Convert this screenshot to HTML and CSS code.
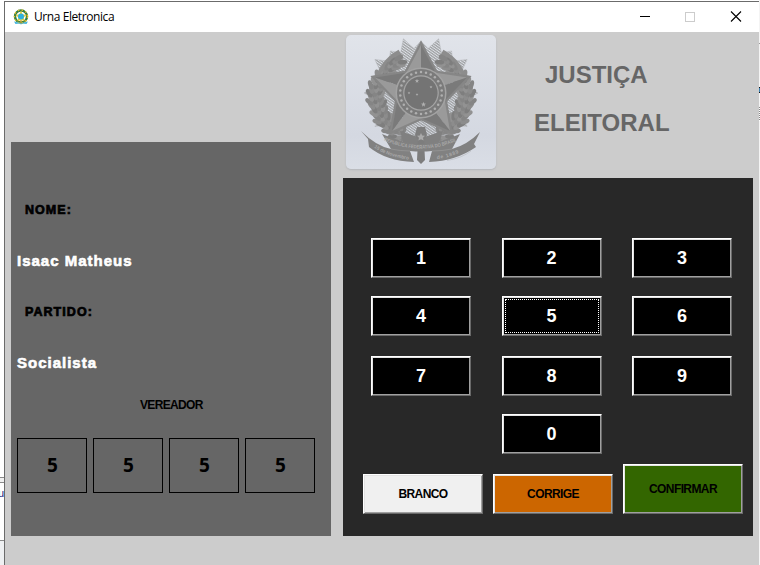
FILE: index.html
```html
<!DOCTYPE html>
<html lang="pt-BR">
<head>
<meta charset="utf-8">
<title>Urna Eletronica</title>
<link rel="stylesheet" href="styles.css">
</head>
<body>
<div class="desktop">
  <div class="behind-left">
    <div class="pane pane-a"></div>
    <div class="pane pane-b"></div>
    <div class="pane pane-c"><span>u</span></div>
    <div class="pane pane-d"></div>
  </div>
  <main class="window">
    <header class="titlebar">
      <svg class="app-icon" viewBox="0 0 16 16">
        <circle cx="8" cy="7.500" r="6" fill="none" stroke="#2f7d42" stroke-width="2.400"/>
        <circle cx="8" cy="7.500" r="6.500" fill="none" stroke="#e5bd28" stroke-width="1.400" stroke-dasharray="1.600 2.200"/>
        <path d="M8 1.500l1.600 4 4.200.3-3.200 2.700 1.100 4.200L8 10.400l-3.700 2.300 1.100-4.200-3.200-2.700 4.200-.3z" fill="#e8cf3c"/>
        <circle cx="8" cy="7.500" r="3" fill="#2fb0dc"/>
        <path d="M1 12.500l3 .8 4 .7 4-.7 3-.8-1.500 2.500-4-.5-1.500 1-1.500-1-4 .5z" fill="#42b4dc"/>
        <path d="M7.300 11h1.400v3.500H7.300z" fill="#c7a530"/>
      </svg>
      <span class="title">Urna Eletronica</span>
      <svg class="controls" viewBox="0 0 130 30" shape-rendering="crispEdges">
        <path d="M11 14.500h10" stroke="#000"/>
        <path d="M56.500 10.500h9v9h-9z" fill="none" stroke="#ccc"/>
        <path d="M102 9.500l10 10M112 9.500l-10 10" stroke="#000" stroke-width="1.100" shape-rendering="auto"/>
      </svg>
    </header>
    <div class="client">
      <section class="screen">
        <div class="label">NOME:</div>
        <div class="value name">Isaac Matheus</div>
        <div class="label party-label">PARTIDO:</div>
        <div class="value party">Socialista</div>
        <div class="office"><span>VEREADOR</span></div>
        <div class="digits"><div>5</div><div>5</div><div>5</div><div>5</div></div>
      </section>
      <section class="right">
        <div class="brand">
          <div class="crest">
            <svg id="crest" viewBox="346 35 150 134">
              <defs>
                <pattern id="hatch" width="2.200" height="2.200" patternUnits="userSpaceOnUse" patternTransform="rotate(35)">
                  <rect width="2.200" height="1.300" fill="#a0a2a4"/>
                </pattern>
                <path id="arc1" d="M384 140.500Q421 157 459 140"/>
                <path id="arc2" d="M374 147.500Q388 157 411 160"/>
                <path id="arc3" d="M437 159Q449 158 463 151"/>
              </defs>
              <g id="rays"></g>
              <path d="M394 131Q371 114 378 86Q383 64 401 54M448 131Q471 114 464 86Q459 64 441 54" fill="none" stroke="#8d8d8d" stroke-width="10"/>
              <g id="leaves"></g>
              <path d="M400 131L421 138 443 131 438 145 421 149 404 145z" fill="#808080"/>
              <g id="star"></g>
              <circle cx="421" cy="93" r="25.500" fill="#a3a3a3"/>
              <circle cx="421" cy="93" r="24" fill="#7b7b7b"/>
              <circle cx="421" cy="93" r="17.800" fill="#a5a5a5"/>
              <circle cx="421" cy="93" r="16.600" fill="#747474"/>
              <g id="dots" fill="#b0b0b0"></g>
              <path d="M417 127h8l2 8-3 5 1 20-4 4-4-4 1-20-3-5z" fill="#7d7d7d"/>
              <path d="M421 133l1.200 2.500 2.800.3-2 2 .6 2.800-2.600-1.400-2.600 1.400.6-2.800-2-2 2.800-.3z" fill="#aaa"/>
              <path d="M361 131Q376 146 391 149L382 134Q402 143 421 144Q440 143 460 134L452 149Q467 145 480 132L474 144 476 147Q456 161 429 162L432 151Q421 152 410 151L414 162Q386 161 369 147L368 139z" fill="#818181"/>
              <path d="M391 149Q400 151 410 151M432 151Q442 151 452 149" fill="none" stroke="#999" stroke-width=".7"/>
              <g class="ribbon-text">
                <text><textPath href="#arc1" textLength="75" lengthAdjust="spacingAndGlyphs">REPUBLICA FEDERATIVA DO BRASIL</textPath></text>
                <text><textPath href="#arc2" textLength="37" lengthAdjust="spacingAndGlyphs">15 de Novembro</textPath></text>
                <text><textPath href="#arc3" textLength="23">de 1889</textPath></text>
              </g>
              <path d="M447 160.500Q462 158 471 151" fill="none" stroke="#b6b8bd" stroke-width=".6"/>
            </svg>
          </div>
          <div class="court"><span class="l1">JUSTIÇA</span><span class="l2">ELEITORAL</span></div>
        </div>
        <div class="keypad">
          <div class="keys">
            <button>1</button><button>2</button><button>3</button>
            <button>4</button><button class="focused">5</button><button>6</button>
            <button>7</button><button>8</button><button>9</button>
            <button class="zero">0</button>
          </div>
          <div class="actions">
            <button class="blank"><span>BRANCO</span></button>
            <button class="fix"><span>CORRIGE</span></button>
            <button class="confirm"><span>CONFIRMAR</span></button>
          </div>
        </div>
      </section>
    </div>
  </main>
  <div class="behind-right"><i class="m1"></i><i class="m2"></i><i class="m3"></i></div>
</div>
<script src="crest.js"></script>
</body>
</html>
```
FILE: crest.js
```js
const NS = "http://www.w3.org/2000/svg";
const CX = 421, CY = 93;
function add(id, tag, attrs) {
  const el = document.createElementNS(NS, tag);
  for (const k in attrs) el.setAttribute(k, attrs[k]);
  document.getElementById(id).appendChild(el);
}
function polar(r, deg, cy = CY) {
  const a = deg * Math.PI / 180;
  return [CX + r * Math.sin(a), cy - r * Math.cos(a)];
}

// Sunburst behind the wreath
const burst = [];
for (let i = 0; i < 40; i++) {
  const major = i % 4 === 2;
  burst.push(polar(i % 2 ? 45 : (major ? 57 : 52), i * 9).join());
}
add("rays", "polygon", { points: burst.join(" "), fill: "url(#hatch)", stroke: "#b2b4b8", "stroke-width": 0.5 });

// Laurel branches, drawn as rows of overlapping leaves on both sides
const tones = ["#858585", "#8c8c8c", "#7e7e7e", "#929292"];
for (const side of [-1, 1]) {
  for (let i = 0; i < 27; i++) {
    const deg = 153 - i * 4.7;
    const rows = deg < 62 ? 2 : 3;
    for (let row = 0; row < rows; row++) {
      const wobble = ((i * 7 + row * 5) % 5) - 2;
      const r = 36 + row * 5.5 + (deg > 75 ? 4 : 0) + wobble * 0.7;
      const [x, y] = polar(r, side * (deg + row * 1.5));
      const turn = side * (deg - 90 + (row - 1) * 30 + wobble * 7);
      add("leaves", "ellipse", {
        cx: x, cy: y, rx: 2.4, ry: 4.8, fill: tones[(i * 3 + row * 2) % 4],
        transform: `rotate(${turn} ${x} ${y})`
      });
    }
  }
}

// Five-pointed star with bevelled halves
const tips = [[421, 45], [467, 77.5], [450, 131], [392, 131], [375, 77.5]];
const inner = [0, 1, 2, 3, 4].map(i => polar(25, 36 + i * 72));
for (let i = 0; i < 5; i++) {
  const t = tips[i], a = inner[(i + 4) % 5], b = inner[i];
  add("star", "polyline", { points: [a, t, b].join(" "), fill: "none", stroke: "#868686", "stroke-width": 4.5 });
}
for (let i = 0; i < 5; i++) {
  const t = tips[i], a = inner[(i + 4) % 5], b = inner[i];
  add("star", "polygon", { points: [t, a, [CX, CY]].join(" "), fill: "#9a9a9a" });
  add("star", "polygon", { points: [t, b, [CX, CY]].join(" "), fill: "#7a7a7a" });
}

for (let i = 0; i < 26; i++) {
  const [x, y] = polar(20.9, i * 360 / 26);
  add("dots", "circle", { cx: x, cy: y, r: 1.25 });
}
for (const [x, y, r] of [[417, 81, 1.9], [431, 87, 1.3], [409, 93, 1.2], [417, 94.5, 1.2], [423.5, 104.5, 2.2]]) {
  const pts = [];
  for (let i = 0; i < 10; i++) {
    const a = i * Math.PI / 5, q = i % 2 ? r * 0.5 : r * 1.2;
    pts.push([x + q * Math.sin(a), y - q * Math.cos(a)].join());
  }
  add("dots", "polygon", { points: pts.join(" ") });
}
```
FILE: styles.css
```css
* { box-sizing: border-box; }
body { margin: 0; width: 760px; height: 565px; overflow: hidden; font-family: "Liberation Sans", Arial, sans-serif; }
.desktop { display: flex; width: 760px; height: 565px; background: #fff; }
.behind-left { width: 4px; display: flex; flex-direction: column; overflow: hidden; }
.pane-a { height: 478px; background: #fff; border-bottom: 1px solid #8a8a8a; }
.pane-b { height: 5px; background: #f0f0f0; border-bottom: 1px solid #8a8a8a; }
.pane-c { height: 58px; border-bottom: 1px solid #8a8a8a; font-size: 11px; line-height: 20px; color: #1a1a80; }
.pane-c span { margin-left: -2px; }
.pane-d { flex: 1; background: #eef0f2; }

.window { width: 755px; height: 564px; margin-top: 1px; border-top: 1px solid #6b6b6b; border-left: 1px solid #6b6b6b; background: #ccc; }
.titlebar { height: 30px; background: #fff; display: flex; align-items: center; padding-left: 8px; }
.app-icon { width: 16px; height: 16px; }
.title { margin-left: 5px; font: 12px/16px "Open Sans", "Noto Sans", sans-serif; letter-spacing: -.42px; color: #000; }
.controls { width: 130px; height: 30px; margin-left: auto; }

.client { display: flex; padding-left: 6px; }
.screen { width: 320px; height: 394px; margin-top: 110px; background: #666; padding: 60px 6px 0; color: #000; }
.label { padding-left: 8px; font-size: 12.5px; line-height: 16px; font-weight: bold; letter-spacing: 1.05px; -webkit-text-stroke: .7px #000; }
.value { color: #fff; font-size: 15px; line-height: 18px; font-weight: bold; letter-spacing: 1px; -webkit-text-stroke: .6px #fff; }
.name { margin-top: 34px; }
.party-label { margin-top: 34px; }
.party { margin-top: 34px; }
.office { margin-top: 26px; padding-left: 123px; font-size: 12px; line-height: 14px; font-weight: bold; letter-spacing: -.65px; }
.digits { margin-top: 26px; display: flex; gap: 6px; }
.digits div { width: 70px; height: 55px; border: 1px solid #000; padding-left: 1px; font: bold 19px/53px "Open Sans", "Noto Sans", sans-serif; text-align: center; }

.right { width: 410px; margin-left: 12px; }
.brand { height: 146px; display: flex; padding: 3px 0 0 3px; }
.crest { width: 150px; height: 134px; border-radius: 5px; background: linear-gradient(#e1e4ea, #d4d8e1 75%, #dadee6); box-shadow: 0 1px 2px #b4b6bb; }
.crest svg { display: block; width: 150px; height: 134px; }
.ribbon-text { font: bold 5px "Liberation Sans", sans-serif; fill: #a8a8a8; }
.court { display: flex; flex-direction: column; font-size: 24px; line-height: 48px; font-weight: bold; color: #666; padding-top: 16px; }
.l1 { margin-left: 49px; }
.l2 { margin-left: 38px; }

.keypad { height: 358px; background: #282828; padding: 60px 0 0 20px; }
.keys { display: grid; grid-template-columns: 100px 100px 100px; grid-template-rows: 58px 60px 58px 40px; column-gap: 30.5px; align-items: start; padding-left: 8px; }
.zero { grid-column: 2; }
button { margin: 0; padding: 0; border: 1px solid; border-color: #fff #696969 #696969 #fff; box-shadow: inset 1px 1px #e3e3e3, inset -1px -1px #a0a0a0; border-radius: 0; background: #000; color: #fff; font: bold 18px "Liberation Sans", Arial, sans-serif; }
.keys button { height: 40px; }
.focused { outline: 1px dotted #fff; outline-offset: -4px; }
.actions { display: flex; align-items: flex-end; gap: 10px; margin-top: 10px; }
.actions button { width: 120px; height: 40px; color: #000; font-size: 12px; letter-spacing: -.6px; }
.actions .blank { background: #f0f0f0; }
.actions .fix { background: #cc6600; }
.actions .confirm { height: 50px; background: #336600; }

.behind-right { width: 1px; background: #f4f4f4; }
.behind-right i { display: block; }
.m1 { height: 1px; margin-top: 43px; background: #999; }
.m2 { height: 6px; margin-top: 43px; background: #3b83b5; border: solid #111; border-width: 1px 0; }
.m3 { height: 14px; margin-top: 14px; background: repeating-linear-gradient(#888 0 1px, #fff 1px 2px); }
```
